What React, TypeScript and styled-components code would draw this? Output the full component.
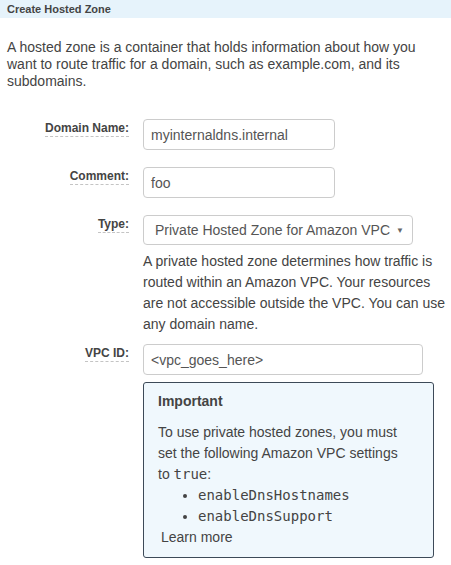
import React from "react";
import styled, { createGlobalStyle } from "styled-components";

const Global = createGlobalStyle`
  html, body { margin: 0; padding: 0; background: #fff; }
  body { font-family: "Liberation Sans", Arial, sans-serif; color: #444; }
  * { box-sizing: border-box; }
`;

const Page = styled.div`
  width: 451px;
  background: #fff;
`;

const Header = styled.div`
  height: 18px;
  background: #e6f3fb;
  padding: 0 7px;
  display: flex;
  align-items: center;
  font-size: 11px;
  font-weight: bold;
  color: #444;
`;

const Intro = styled.p`
  margin: 21px 0 0;
  padding: 0 7px;
  font-size: 14px;
  line-height: 17px;
  color: #444;
`;

const Form = styled.div`
  display: grid;
  grid-template-columns: 129px 1fr;
  column-gap: 14px;
  margin-top: 29px;
`;

const LabelCell = styled.div<{ $top?: number }>`
  display: flex;
  justify-content: flex-end;
  align-items: flex-start;
  padding-top: ${(p) => p.$top ?? 2}px;
`;

const Label = styled.span`
  font-size: 12px;
  font-weight: bold;
  line-height: 15px;
  color: #444;
  border-bottom: 1px dashed #c4c4c4;
`;

const FieldCell = styled.div<{ $gap?: number }>`
  margin-bottom: ${(p) => p.$gap ?? 0}px;
`;

const Input = styled.div<{ $w: number }>`
  width: ${(p) => p.$w}px;
  height: 31px;
  border: 1px solid #ccc;
  border-radius: 4px;
  padding: 0 7px;
  display: flex;
  align-items: center;
  font-size: 14px;
  color: #555;
`;

const Select = styled.div`
  width: 270px;
  height: 30px;
  border: 1px solid #ccc;
  border-radius: 4px;
  padding: 0 8px 0 11px;
  display: flex;
  align-items: center;
  justify-content: space-between;
  font-size: 14px;
  color: #555;
`;

const Caret = styled.span`
  font-size: 8px;
  color: #666;
`;

const Help = styled.p`
  margin: 6px 0 0;
  width: 305px;
  font-size: 14px;
  line-height: 21px;
  color: #444;
`;

const InfoBox = styled.div`
  margin-top: 7px;
  width: 291px;
  border: 1px solid #3d4a58;
  border-radius: 3px;
  background: #f0f8fd;
  padding: 8px 30px 9px 14px;
  font-size: 14px;
  line-height: 21px;
  color: #444;
`;

const InfoTitle = styled.div`
  font-weight: bold;
  margin-bottom: 10px;
`;

const Code = styled.code`
  font-family: "DejaVu Sans Mono", monospace;
  font-size: 14px;
  line-height: 21px;
`;

const List = styled.ul`
  margin: 0;
  padding-left: 40px;
  list-style: disc;
`;

const LearnMore = styled.div`
  margin-left: 3px;
`;

export default function App() {
  return (
    <Page>
      <Global />
      <Header>Create Hosted Zone</Header>
      <Intro>
        A hosted zone is a container that holds information about how you want
        to route traffic for a domain, such as example.com, and its subdomains.
      </Intro>
      <Form>
        <LabelCell>
          <Label>Domain Name:</Label>
        </LabelCell>
        <FieldCell $gap={17}>
          <Input $w={192}>myinternaldns.internal</Input>
        </FieldCell>

        <LabelCell>
          <Label>Comment:</Label>
        </LabelCell>
        <FieldCell $gap={17}>
          <Input $w={192}>foo</Input>
        </FieldCell>

        <LabelCell>
          <Label>Type:</Label>
        </LabelCell>
        <FieldCell $gap={9}>
          <Select>
            <span>Private Hosted Zone for Amazon VPC</span>
            <Caret>▼</Caret>
          </Select>
          <Help>
            A private hosted zone determines how traffic is routed within an
            Amazon VPC. Your resources are not accessible outside the VPC. You
            can use any domain name.
          </Help>
        </FieldCell>

        <LabelCell>
          <Label>VPC ID:</Label>
        </LabelCell>
        <FieldCell>
          <Input $w={280}>&lt;vpc_goes_here&gt;</Input>
          <InfoBox>
            <InfoTitle>Important</InfoTitle>
            <div>
              To use private hosted zones, you must set the following Amazon VPC
              settings to <Code>true</Code>:
            </div>
            <List>
              <li>
                <Code>enableDnsHostnames</Code>
              </li>
              <li>
                <Code>enableDnsSupport</Code>
              </li>
            </List>
            <LearnMore>Learn more</LearnMore>
          </InfoBox>
        </FieldCell>
      </Form>
    </Page>
  );
}
